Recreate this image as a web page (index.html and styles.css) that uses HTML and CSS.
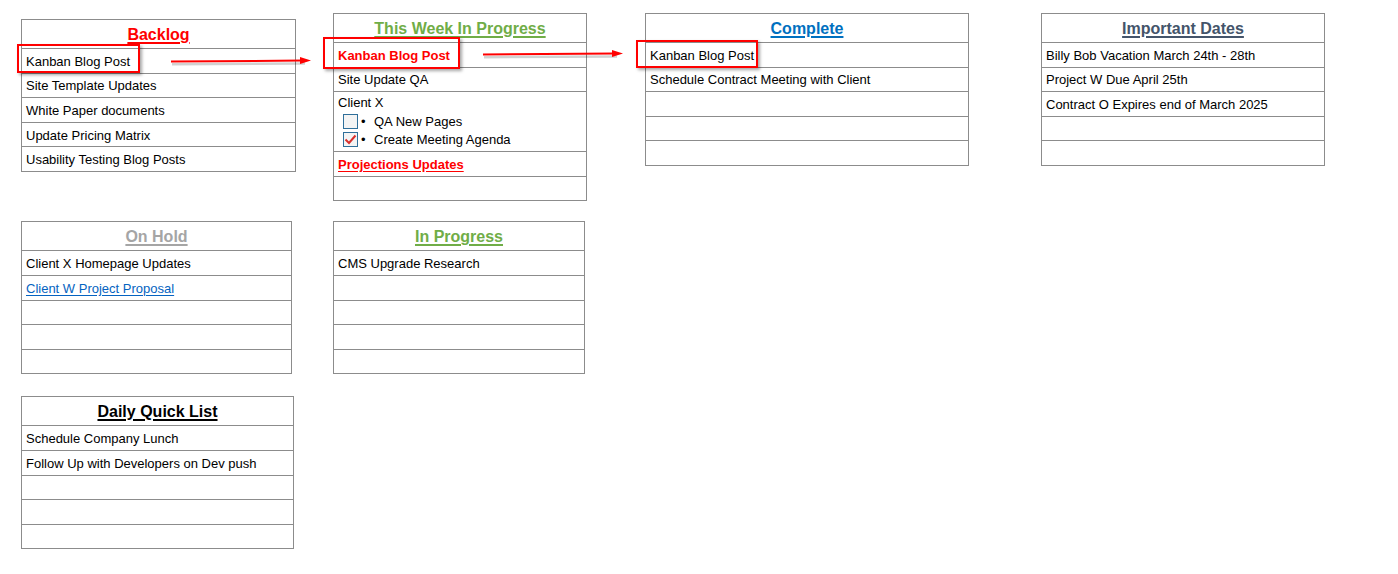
FILE: index.html
```html
<!DOCTYPE html>
<html>
<head>
<meta charset="utf-8">
<link rel="stylesheet" href="styles.css">
</head>
<body>
<div class="board">
  <section class="card card-backlog">
    <div class="head"><span class="title t-red">Backlog</span></div>
    <div class="row">Kanban Blog Post
      <span class="mark mark-backlog"></span>
      <svg class="arrow arrow-1" width="144" height="12" viewBox="0 0 144 12"><path d="M1 7.2 L134 6.4" stroke="rgba(0,0,0,0.18)" stroke-width="2.5" transform="translate(1,2)"/><path d="M1 6.4 L133 5.6" stroke="#ff0000" stroke-width="2"/><path d="M130 2 L141 5.6 L130 9 Z" fill="#ff0000"/></svg>
    </div>
    <div class="row">Site Template Updates</div>
    <div class="row">White Paper documents</div>
    <div class="row">Update Pricing Matrix</div>
    <div class="row">Usability Testing Blog Posts</div>
  </section>

  <section class="card card-week">
    <div class="head"><span class="title t-green">This Week In Progress</span></div>
    <div class="row red-bold">Kanban Blog Post
      <span class="mark mark-week"></span>
      <svg class="arrow arrow-2" width="144" height="12" viewBox="0 0 144 12"><path d="M1 7.2 L134 6.4" stroke="rgba(0,0,0,0.18)" stroke-width="2.5" transform="translate(1,2)"/><path d="M1 6.4 L133 5.6" stroke="#ff0000" stroke-width="2"/><path d="M130 2 L141 5.6 L130 9 Z" fill="#ff0000"/></svg>
    </div>
    <div class="row">Site Update QA</div>
    <div class="row row-tall">
      <div class="line">Client X</div>
      <div class="check-line"><span class="box"></span><span class="bullet">•</span><span>QA New Pages</span></div>
      <div class="check-line"><span class="box"><svg width="13" height="13" viewBox="0 0 13 13"><path d="M1.5 6.5 L5 10 L11.5 2.5" fill="none" stroke="#d9302c" stroke-width="2"/></svg></span><span class="bullet">•</span><span>Create Meeting Agenda</span></div>
    </div>
    <div class="row"><span class="red-bold underline">Projections Updates</span></div>
    <div class="row"></div>
  </section>

  <section class="card card-complete">
    <div class="head"><span class="title t-blue">Complete</span></div>
    <div class="row">Kanban Blog Post<span class="mark mark-complete"></span></div>
    <div class="row">Schedule Contract Meeting with Client</div>
    <div class="row"></div>
    <div class="row"></div>
    <div class="row"></div>
  </section>

  <section class="card card-dates">
    <div class="head"><span class="title t-slate">Important Dates</span></div>
    <div class="row">Billy Bob Vacation March 24th - 28th</div>
    <div class="row">Project W Due April 25th</div>
    <div class="row">Contract O Expires end of March 2025</div>
    <div class="row"></div>
    <div class="row"></div>
  </section>

  <section class="card card-hold">
    <div class="head"><span class="title t-gray">On Hold</span></div>
    <div class="row">Client X Homepage Updates</div>
    <div class="row"><span class="link">Client W Project Proposal</span></div>
    <div class="row"></div>
    <div class="row"></div>
    <div class="row"></div>
  </section>

  <section class="card card-progress">
    <div class="head"><span class="title t-green">In Progress</span></div>
    <div class="row">CMS Upgrade Research</div>
    <div class="row"></div>
    <div class="row"></div>
    <div class="row"></div>
    <div class="row"></div>
  </section>

  <section class="card card-daily">
    <div class="head"><span class="title t-black">Daily Quick List</span></div>
    <div class="row">Schedule Company Lunch</div>
    <div class="row">Follow Up with Developers on Dev push</div>
    <div class="row"></div>
    <div class="row"></div>
    <div class="row"></div>
  </section>
</div>
</body>
</html>
```

FILE: styles.css
```css
* { box-sizing: border-box; }

html, body {
  margin: 0;
  background: #ffffff;
}

body {
  font-family: "Liberation Sans", Arial, sans-serif;
  font-size: 13px;
  color: #000000;
}

.board {
  display: grid;
  grid-template-columns: 312px 312px 396px 300px;
  grid-template-rows: auto auto auto;
  row-gap: 20px;
  padding: 13px 0 0 21px;
  align-items: start;
}

.card {
  border: 1px solid #8c8c8c;
  background: #ffffff;
}

.card-backlog { width: 275px; margin-top: 6px; }
.card-week { width: 254px; }
.card-complete { width: 324px; }
.card-dates { width: 284px; }
.card-hold { width: 271px; grid-column: 1; grid-row: 2; }
.card-progress { width: 252px; grid-column: 2; grid-row: 2; }
.card-daily { width: 273px; grid-column: 1; grid-row: 3; margin-top: 2px; }

.head {
  height: 28px;
  display: flex;
  align-items: center;
  justify-content: center;
  padding-top: 2px;
}

.title {
  font-weight: bold;
  font-size: 16px;
  text-decoration: underline;
  text-decoration-thickness: 2px;
  text-underline-offset: 2px;
}

.t-red { color: #ff0000; }
.t-green { color: #70ad47; }
.t-blue { color: #0070c0; }
.t-slate { color: #44546a; }
.t-gray { color: #a5a5a5; }
.t-black { color: #000000; }

.row {
  position: relative;
  height: 24.6px;
  border-top: 1px solid #8c8c8c;
  display: flex;
  align-items: center;
  padding: 1px 0 0 4px;
  white-space: nowrap;
}

.row-tall {
  height: 60px;
  flex-direction: column;
  align-items: flex-start;
  justify-content: flex-start;
  padding-top: 2px;
}

.line { height: 18px; line-height: 18px; }

.check-line {
  display: flex;
  align-items: center;
  height: 18px;
  padding-left: 5px;
}

.box {
  width: 15px;
  height: 15px;
  border: 1px solid #2f6f9a;
  background: #f4f4f4;
  display: flex;
  align-items: center;
  justify-content: center;
}

.bullet {
  width: 16px;
  padding-left: 3px;
  font-size: 13px;
}

.red-bold {
  color: #ff0000;
  font-weight: bold;
}

.underline {
  text-decoration: underline;
  text-underline-offset: 2px;
}

.link {
  color: #0563c1;
  text-decoration: underline;
  text-underline-offset: 2px;
}

.mark {
  position: absolute;
  border: 2px solid #ff0000;
  box-shadow: 2px 2px 3px rgba(0, 0, 0, 0.35);
  z-index: 2;
}

.mark-backlog { left: -5px; top: -5px; width: 123px; height: 29px; }
.mark-week { left: -11px; top: -6px; width: 137px; height: 32px; }
.mark-complete { left: -10px; top: -3px; width: 122px; height: 28px; }

.arrow {
  position: absolute;
  z-index: 3;
  overflow: visible;
}

.arrow-1 { left: 148px; top: 6px; }
.arrow-2 { left: 148px; top: 5px; }
```
